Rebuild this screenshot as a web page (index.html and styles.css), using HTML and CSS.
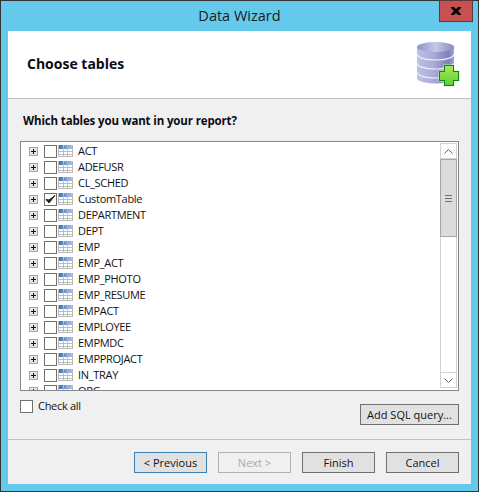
FILE: index.html
```html
<!DOCTYPE html>
<html lang="en">
<head>
<meta charset="utf-8">
<title>Data Wizard</title>
<link rel="stylesheet" href="styles.css">
</head>
<body>
<div class="window">
  <div class="titlebar">
    <span class="title">Data Wizard</span>
    <div class="close"><svg width="12" height="10" viewBox="0 0 12 10"><path d="M1 1h3l2 2 2-2h3v1L8 5l3 3v1H8L6 7 4 9H1V8l3-3-3-3z" fill="#000"/></svg></div>
  </div>
  <div class="content">
    <header class="header">
      <h1 class="heading">Choose tables</h1>
      <svg class="db-icon" width="44" height="46" viewBox="0 0 44 46">
        <defs>
          <linearGradient id="cyl" x1="0" x2="1" y1="0" y2="0">
            <stop offset="0" stop-color="#c0c1e6"/>
            <stop offset=".45" stop-color="#a9abd9"/>
            <stop offset=".85" stop-color="#7d7fb8"/>
            <stop offset="1" stop-color="#a2a4d0"/>
          </linearGradient>
          <linearGradient id="cap" x1="0" x2="1" y1="0" y2="0">
            <stop offset="0" stop-color="#8f91c6"/>
            <stop offset=".5" stop-color="#c6c7e8"/>
            <stop offset="1" stop-color="#8b8dc0"/>
          </linearGradient>
          <linearGradient id="plus" x1="0" x2="0" y1="0" y2="1">
            <stop offset="0" stop-color="#a4e85a"/>
            <stop offset="1" stop-color="#62d030"/>
          </linearGradient>
        </defs>
        <path d="M1 6v31c0 3 8 5.500 18.500 5.500S38 40 38 37V6z" fill="url(#cyl)"/>
        <path d="M1 13c0 3.500 8 6 18.500 6S38 16.500 38 13M1 22c0 3.500 8 6 18.500 6S38 25.500 38 22M1 31c0 3.500 8 6 18.500 6S38 34.500 38 31" fill="none" stroke="#f0f0fa" stroke-width="1.200"/>
        <ellipse cx="19.500" cy="6" rx="18.500" ry="5" fill="url(#cap)"/>
        <path d="M28 24h10v6h5v10h-5v5H28v-5h-5V30h5z" fill="#0a8a0a" stroke="#d8e8d8" stroke-width="1" paint-order="stroke"/>
        <path d="M29 25h8v6h5v8h-5v5h-8v-5h-5v-8h5z" fill="url(#plus)"/>
      </svg>
    </header>
    <main class="body">
      <p class="prompt">Which tables you want in your report?</p>
      <div class="list">
        <div class="rows">
          <div class="row"><span class="exp"></span><span class="box"></span><span class="tbl"></span><span class="name">ACT</span></div>
          <div class="row"><span class="exp"></span><span class="box"></span><span class="tbl"></span><span class="name">ADEFUSR</span></div>
          <div class="row"><span class="exp"></span><span class="box"></span><span class="tbl"></span><span class="name">CL_SCHED</span></div>
          <div class="row"><span class="exp"></span><span class="box"><svg class="tick" width="11" height="11" viewBox="0 0 11 11"><path d="M1 5.500 4 9 10 1.500 4 6z" fill="#222" stroke="#222"/></svg></span><span class="tbl"></span><span class="name">CustomTable</span></div>
          <div class="row"><span class="exp"></span><span class="box"></span><span class="tbl"></span><span class="name">DEPARTMENT</span></div>
          <div class="row"><span class="exp"></span><span class="box"></span><span class="tbl"></span><span class="name">DEPT</span></div>
          <div class="row"><span class="exp"></span><span class="box"></span><span class="tbl"></span><span class="name">EMP</span></div>
          <div class="row"><span class="exp"></span><span class="box"></span><span class="tbl"></span><span class="name">EMP_ACT</span></div>
          <div class="row"><span class="exp"></span><span class="box"></span><span class="tbl"></span><span class="name">EMP_PHOTO</span></div>
          <div class="row"><span class="exp"></span><span class="box"></span><span class="tbl"></span><span class="name">EMP_RESUME</span></div>
          <div class="row"><span class="exp"></span><span class="box"></span><span class="tbl"></span><span class="name">EMPACT</span></div>
          <div class="row"><span class="exp"></span><span class="box"></span><span class="tbl"></span><span class="name">EMPLOYEE</span></div>
          <div class="row"><span class="exp"></span><span class="box"></span><span class="tbl"></span><span class="name">EMPMDC</span></div>
          <div class="row"><span class="exp"></span><span class="box"></span><span class="tbl"></span><span class="name">EMPPROJACT</span></div>
          <div class="row"><span class="exp"></span><span class="box"></span><span class="tbl"></span><span class="name">IN_TRAY</span></div>
          <div class="row"><span class="exp"></span><span class="box"></span><span class="tbl"></span><span class="name">ORG</span></div>
        </div>
        <div class="scrollbar">
          <div class="sb-btn"><svg width="9" height="5" viewBox="0 0 9 5"><path d="M.5 4.500l4-4 4 4" fill="none" stroke="#606060"/></svg></div>
          <div class="thumb"><span class="grip"></span></div>
          <div class="track"></div>
          <div class="sb-btn sb-down"><svg width="9" height="5" viewBox="0 0 9 5"><path d="M.5 .5l4 4 4-4" fill="none" stroke="#606060"/></svg></div>
        </div>
      </div>
      <div class="options">
        <label class="check-all"><span class="box"></span><span class="check-label">Check all</span></label>
        <button class="btn btn-sql" type="button">Add SQL query...</button>
      </div>
    </main>
    <footer class="footer">
      <button class="btn btn-focus" type="button">&lt; Previous</button>
      <button class="btn btn-off" type="button" disabled>Next &gt;</button>
      <button class="btn" type="button">Finish</button>
      <button class="btn" type="button">Cancel</button>
    </footer>
  </div>
</div>
</body>
</html>
```
FILE: styles.css
```css
* { box-sizing: border-box; }
html, body { margin: 0; padding: 0; }
body {
  width: 479px;
  height: 492px;
  overflow: hidden;
  font-family: "Open Sans", "Liberation Sans", sans-serif;
  font-size: 11px;
  color: #000;
}
.window {
  width: 479px;
  height: 492px;
  display: flex;
  flex-direction: column;
  background: #65c9ec;
  border: 1px solid #333;
  padding: 0 7px 7px 7px;
}
.titlebar {
  height: 30px;
  flex: none;
  position: relative;
  display: flex;
  align-items: center;
  justify-content: center;
}
.title {
  font-size: 14.500px;
  color: #1a1a1a;
  position: relative;
  top: -1px;
}
.close {
  position: absolute;
  top: -1px;
  right: -2px;
  width: 34px;
  height: 22px;
  background: #c75050;
  border: 1px solid #5a3a3a;
  display: flex;
  align-items: center;
  justify-content: center;
}
.content {
  flex: 1;
  display: flex;
  flex-direction: column;
  background: #f0f0f0;
  min-height: 0;
}
.header {
  height: 68px;
  flex: none;
  background: #fff;
  border-bottom: 1px solid #c0c0c0;
  display: flex;
  align-items: center;
  justify-content: space-between;
  padding: 0 11px 2px 19px;
}
.heading {
  margin: 0;
  font-size: 14px;
  font-weight: 700;
  color: #0c0c14;
}
.db-icon { margin-top: 1px; }
.body {
  flex: 1;
  display: flex;
  flex-direction: column;
  padding: 0 12px;
  min-height: 0;
}
.prompt {
  margin: 14px 0 0 3px;
  height: 15px;
  line-height: 15px;
  font-weight: 700;
  font-size: 11.500px;
  letter-spacing: -.14px;
  color: #0c0c14;
}
.list {
  margin-top: 13px;
  height: 250px;
  display: flex;
  background: #fff;
  border: 1px solid #828790;
  overflow: hidden;
}
.rows {
  flex: 1;
  padding-top: 1px;
  overflow: hidden;
}
.row {
  height: 16px;
  display: flex;
  align-items: center;
  padding-left: 8px;
}
.exp {
  width: 9px;
  height: 9px;
  flex: none;
  border: 1px solid #a6a6a6;
  background:
    linear-gradient(#111, #111) center / 5px 1px no-repeat,
    linear-gradient(#111, #111) center / 1px 5px no-repeat,
    #e6e6e6;
}
.box {
  width: 13px;
  height: 13px;
  flex: none;
  border: 1px solid #707070;
  background: #fff;
  display: flex;
  align-items: center;
  justify-content: center;
}
.row .box { margin-left: 6px; }
.tbl {
  width: 15px;
  height: 12px;
  flex: none;
  margin-left: 1px;
  border: 1px solid #b8b8b8;
  border-top: 0;
  background:
    linear-gradient(#bdbdbd, #bdbdbd) 0 6px / 100% 1px no-repeat,
    linear-gradient(#bdbdbd, #bdbdbd) 0 9px / 100% 1px no-repeat,
    linear-gradient(#bdbdbd, #bdbdbd) 4px 0 / 1px 100% no-repeat,
    linear-gradient(#bdbdbd, #bdbdbd) 8px 0 / 1px 100% no-repeat,
    linear-gradient(to right, #3f6fc8, #a8c4ec) 0 0 / 100% 4px no-repeat,
    #fff;
}
.name {
  margin: 0 0 2px 5px;
  white-space: nowrap;
  letter-spacing: -.3px;
  color: #111;
}
.scrollbar {
  width: 17px;
  flex: none;
  margin: 1px 1px 2px 0;
  display: flex;
  flex-direction: column;
  background: #fff;
  border-left: 1px solid #d2d2d2;
  border-right: 1px solid #d2d2d2;
}
.sb-btn {
  height: 16px;
  flex: none;
  display: flex;
  align-items: center;
  justify-content: center;
  background: #fff;
  border-top: 1px solid #d2d2d2;
  border-bottom: 1px solid #d2d2d2;
}
.thumb {
  height: 78px;
  flex: none;
  margin: 0 -1px;
  background: #dcdcdc;
  border: 1px solid #a6a6a6;
  display: flex;
  align-items: center;
  justify-content: center;
}
.grip {
  width: 7px;
  height: 7px;
  background: repeating-linear-gradient(#707070 0 1.500px, transparent 1.500px 3px);
}
.track { flex: 1; }
.options {
  display: flex;
  justify-content: space-between;
  align-items: flex-start;
  margin-top: 7px;
}
.check-all {
  display: flex;
  align-items: center;
  gap: 5px;
  color: #111;
}
.check-label {
  margin-bottom: 2px;
  letter-spacing: -.3px;
}
.btn {
  width: 73px;
  height: 21px;
  padding: 0;
  font-family: inherit;
  font-size: 11px;
  color: #111;
  background: #e1e1e1;
  border: 1px solid #707070;
  border-radius: 0;
}
.btn-sql {
  width: 99px;
  margin-top: 6px;
}
.footer {
  height: 45px;
  flex: none;
  border-top: 1px solid #c0c0c0;
  display: flex;
  justify-content: flex-end;
  gap: 11px;
  padding: 12px 12px 0 0;
}
.btn-focus { border-color: #3c7fb1; }
.btn-off {
  color: #a8a8a8;
  background: #f0f0f0;
  border-color: #adb2b5;
}
```
